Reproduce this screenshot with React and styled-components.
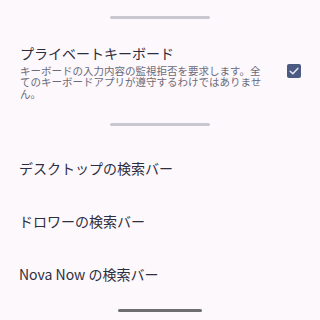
import styled, { createGlobalStyle } from "styled-components";

const Global = createGlobalStyle`
    body {
        margin: 0;
        background: #fdf8fc;
        font-family: "Noto Sans CJK JP", "Noto Sans", sans-serif;
    }
`;

const items = ["デスクトップの検索バー", "ドロワーの検索バー", "Nova Now の検索バー"];

export default function App() {
    return (
        <SPage>
            <Global />
            <SHandle $top={16} />
            <SRow>
                <SText>
                    <STitle>プライベートキーボード</STitle>
                    <SSub>
                        キーボードの入力内容の監視拒否を要求します。全てのキーボードアプリが遵守するわけではありません。
                    </SSub>
                </SText>
                <SCheck>
                    <svg width="14" height="14" viewBox="0 0 14 14">
                        <polyline points="3.2,7.2 5.8,9.8 10.8,4.4" fill="none" stroke="#e4e8f3" strokeWidth="1.5" strokeLinecap="round" strokeLinejoin="round" />
                    </svg>
                </SCheck>
            </SRow>
            <SHandle $top={24} />
            <SList>
                {items.map((item) => (
                    <SItem key={item}>{item}</SItem>
                ))}
            </SList>
            <SNav />
        </SPage>
    );
}

const SPage = styled.div`
    width: 320px;
    height: 320px;
    display: flex;
    flex-direction: column;
    overflow: hidden;
`;
const SHandle = styled.div`
    margin: ${(p) => p.$top}px auto 0;
    width: 100px;
    height: 3px;
    border-radius: 2px;
    background: #c9c8d0;
    flex-shrink: 0;
`;
const SRow = styled.div`
    display: flex;
    align-items: center;
    padding: 24px 19px 0 20px;
`;
const SText = styled.div`
    width: 246px;
`;
const STitle = styled.div`
    font-size: 14px;
    line-height: 20px;
    color: #2c2c3c;
`;
const SSub = styled.div`
    margin-top: 2px;
    font-size: 10.5px;
    line-height: 11.3px;
    color: #6c6b78;
`;
const SCheck = styled.div`
    margin-left: auto;
    width: 14px;
    height: 14px;
    border-radius: 2px;
    background: #4b5a80;
    display: flex;
`;
const SList = styled.div`
    margin-top: 16px;
    display: flex;
    flex-direction: column;
`;
const SItem = styled.div`
    height: 53px;
    line-height: 53px;
    padding-left: 19px;
    font-size: 14px;
    color: #2e2e40;
`;
const SNav = styled.div`
    margin: auto auto 8px;
    width: 84px;
    height: 3px;
    border-radius: 2px;
    background: #6e6e70;
    flex-shrink: 0;
`;
